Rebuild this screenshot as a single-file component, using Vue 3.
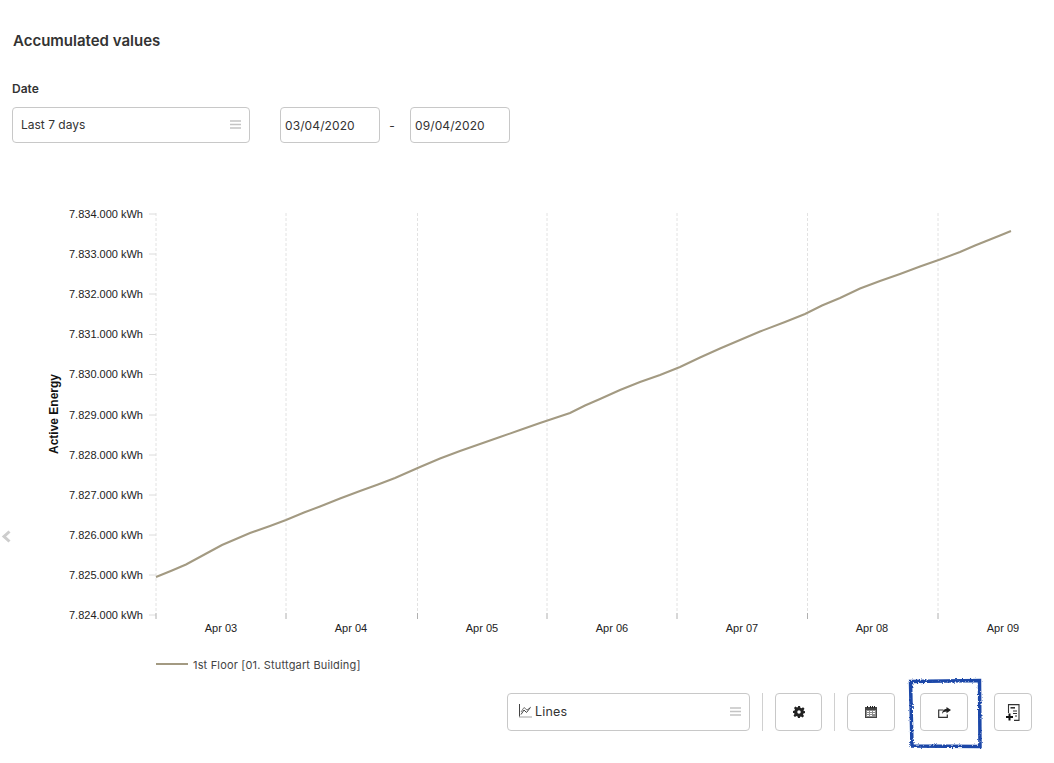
<script setup>
const yTicks = [
  { label: '7.834.000 kWh', y: 214 },
  { label: '7.833.000 kWh', y: 254 },
  { label: '7.832.000 kWh', y: 294 },
  { label: '7.831.000 kWh', y: 334.5 },
  { label: '7.830.000 kWh', y: 374.5 },
  { label: '7.829.000 kWh', y: 415 },
  { label: '7.828.000 kWh', y: 455 },
  { label: '7.827.000 kWh', y: 495 },
  { label: '7.826.000 kWh', y: 535 },
  { label: '7.825.000 kWh', y: 575 },
  { label: '7.824.000 kWh', y: 615 }
]
const xLines = [156, 286, 417.5, 547, 677, 807.5, 938]
const xLabels = [
  { label: 'Apr 03', x: 221 },
  { label: 'Apr 04', x: 351 },
  { label: 'Apr 05', x: 482 },
  { label: 'Apr 06', x: 612 },
  { label: 'Apr 07', x: 742 },
  { label: 'Apr 08', x: 872 },
  { label: 'Apr 09', x: 1003 }
]
const curve = '156,577 172,570.5 186,564.5 198,558 210,551.5 222,545 236,539 250,533 270,526 286,520 304,512.5 320,506.5 340,498.5 360,491 378,484.5 395,478 420,467 440,458.5 460,451 480,444 500,437 520,430 540,423 555,418 570,413 585,405.5 600,399 620,390 640,382 660,375 680,367 700,357.5 720,348.5 740,340 760,331.5 785,322 805,314 822,305.5 840,298 860,288.5 880,281 900,274 920,266.5 940,259.5 960,252 975,245.5 985,241.5 1000,235.5 1011,231'
</script>

<template>
  <div class="page">
    <h1 class="title">Accumulated values</h1>
    <div class="label">Date</div>
    <div class="filters">
      <div class="select select-range">
        <span>Last 7 days</span>
        <svg class="burger" width="11" height="9" viewBox="0 0 11 9"><path d="M0 1h11M0 4.500h11M0 8h11" stroke="#c4c4c4" stroke-width="1.500" /></svg>
      </div>
      <div class="dates">
        <div class="date">03/04/2020</div>
        <span class="dash">-</span>
        <div class="date">09/04/2020</div>
      </div>
    </div>

    <svg class="chart" width="1054" height="513" viewBox="0 180 1054 513">
      <g stroke="#e2e2e2" stroke-width="1" stroke-dasharray="3 2">
        <line v-for="x in xLines" :key="x" :x1="x" :x2="x" y1="213" y2="613" />
      </g>
      <g stroke="#dcdcdc" stroke-width="1">
        <line v-for="t in yTicks" :key="t.y" x1="149" x2="156" :y1="t.y" :y2="t.y" />
        <line v-for="x in xLines" :key="'t' + x" :x1="x" :x2="x" y1="613" y2="619" stroke="#b0b0b0" />
      </g>
      <g class="axis">
        <text v-for="t in yTicks" :key="t.label" x="143" :y="t.y + 3.500" text-anchor="end">{{ t.label }}</text>
        <text v-for="t in xLabels" :key="t.label" :x="t.x" y="632" text-anchor="middle">{{ t.label }}</text>
      </g>
      <text class="axis-title" transform="translate(58 414) rotate(-90)" text-anchor="middle">Active Energy</text>
      <polyline :points="curve" fill="none" stroke="#a39a82" stroke-width="2" />
      <line x1="156" x2="188" y1="664" y2="664" stroke="#a39a82" stroke-width="2" />
      <text class="legend" x="193" y="669">1st Floor [01. Stuttgart Building]</text>
      <path d="M9.500 531.500 4 536.500l5.500 5" fill="none" stroke="#cdcdcd" stroke-width="3" />
    </svg>

    <div class="toolbar">
      <div class="select select-type">
        <span class="type-label">
          <svg width="13" height="14" viewBox="0 0 13 14" fill="none" stroke="#444" stroke-width="1">
            <path d="M.5 0v12.500" />
            <path d="M.5 13h12.500" stroke-dasharray="1 1" />
            <path d="M2 10.500 5 6l2.500 2.500L11 4" />
            <path d="M2 8 5 3.500 8 6l4-3" stroke-width=".7" />
          </svg>
          <span class="lines-text">Lines</span>
        </span>
        <svg class="burger" width="11" height="9" viewBox="0 0 11 9"><path d="M0 1h11M0 4.500h11M0 8h11" stroke="#c4c4c4" stroke-width="1.500" /></svg>
      </div>
      <span class="sep"></span>
      <button class="btn btn-settings">
        <svg width="12" height="12" viewBox="0 0 24 24" fill="#222">
          <path fill-rule="evenodd" d="M10 0h4l.8 3.600 2.200.9 3.200-2 2.800 2.800-2 3.200.9 2.200L24 10v4l-3.100.8-.9 2.200 2 3.200-2.800 2.800-3.200-2-2.200.9L14 24h-4l-.8-3.100-2.200-.9-3.200 2-2.800-2.800 2-3.200-.9-2.200L0 14v-4l3.100-.8.9-2.200-2-3.200L4.800 1l3.200 2 2.200-.9zM12 8.500a3.500 3.500 0 1 0 0 7 3.500 3.500 0 0 0 0-7z" />
        </svg>
      </button>
      <span class="sep"></span>
      <button class="btn btn-calendar">
        <svg width="12" height="12" viewBox="0 0 12 12" shape-rendering="crispEdges">
          <path d="M0 1h12v11H0z" fill="#444" />
          <path d="M2.500 0v2M5 0v2M7 0v2M9.500 0v2" stroke="#222" stroke-width="1" />
          <path d="M1 4h10v7H1z" fill="#8c8c8c" />
          <path d="M2 5h2v1H2zM5 5h2v1H5zM8 5h2v1H8zM2 7h2v1H2zM5 7h2v1H5zM8 7h2v1H8zM5 9h2v1H5zM2 9h2v1H2z" fill="#fff" />
        </svg>
      </button>
      <div class="share-wrap">
        <button class="btn btn-share">
          <svg width="13" height="11" viewBox="0 0 13 11" fill="none">
            <path d="M5.500 3H.7v7.300h8.600V7.500" stroke="#333" stroke-width="1.200" />
            <path d="M8.500 0l4.500 3-4.500 3.200V4.400C6.500 4.400 5 5 4 7 4 4.200 6 2 8.500 1.800z" fill="#222" />
          </svg>
        </button>
        <svg class="mark" width="78" height="75" viewBox="0 0 78 75">
          <defs>
            <filter id="rough" x="-5%" y="-5%" width="110%" height="110%">
              <feTurbulence type="fractalNoise" baseFrequency="0.6" numOctaves="2" seed="4" />
              <feDisplacementMap in="SourceGraphic" scale="3" />
            </filter>
          </defs>
          <path d="M3.500 4.500 L72.500 3.500 L73 69.500 L5 69 Z" fill="none" stroke="#1a46a8" stroke-width="3.500" filter="url(#rough)" />
        </svg>
      </div>
      <button class="btn btn-report">
        <svg width="14" height="17" viewBox="0 0 14 17" fill="none">
          <path d="M2.500 9V.6h10.500v15.800H8" stroke="#333" stroke-width="1.100" />
          <path d="M4.500 3h4.500v1.600H4.500z" fill="#333" />
          <path d="M7 7h4M7 9.500h4M9 12h2" stroke="#333" stroke-width="1" />
          <path d="M0 13h7M3.500 9.500v7" stroke="#111" stroke-width="2" />
        </svg>
      </button>
    </div>
  </div>
</template>

<style>
html, body {
  margin: 0;
  background: #fff;
}
</style>

<style scoped>
.page {
  width: 1054px;
  height: 763px;
  box-sizing: border-box;
  padding-top: 32px;
  overflow: hidden;
  font-family: Inter, "Liberation Sans", sans-serif;
  color: #333;
}
.title {
  margin: 0 0 0 13px;
  font-size: 15px;
  line-height: 18px;
  font-weight: 600;
}
.label {
  margin: 30px 0 0 12px;
  font-size: 12px;
  line-height: 18px;
  font-weight: 600;
}
.filters {
  display: flex;
  gap: 30px;
  margin: 9px 0 0 12px;
}
.select {
  display: flex;
  align-items: center;
  justify-content: space-between;
  box-sizing: border-box;
  border: 1px solid #c8c8c8;
  border-radius: 4px;
  font-size: 12px;
  background: #fff;
}
.select-range {
  width: 238px;
  height: 36px;
  padding: 0 8px 2px 8px;
}
.dates {
  display: flex;
  align-items: center;
}
.date {
  box-sizing: border-box;
  width: 100px;
  height: 36px;
  padding-left: 4px;
  display: flex;
  align-items: center;
  border: 1px solid #c8c8c8;
  border-radius: 4px;
  font-size: 12px;
  letter-spacing: 0.1px;
}
.dash {
  width: 24px;
  margin-right: 6px;
  text-align: center;
  font-size: 12px;
}
.chart {
  display: block;
  margin-top: 37px;
}
.axis text {
  font-family: "Liberation Sans", Arial, sans-serif;
  font-size: 11px;
  fill: #222;
}
.axis-title {
  font-family: "Liberation Sans", Arial, sans-serif;
  font-size: 12px;
  font-weight: 700;
  fill: #111;
}
.legend {
  font-family: Inter, "Liberation Sans", sans-serif;
  font-size: 11px;
  letter-spacing: 0.17px;
  fill: #444;
}
.toolbar {
  display: flex;
  align-items: center;
  height: 38px;
  padding-left: 507px;
}
.select-type {
  width: 243px;
  height: 38px;
  padding: 0 8px 2px 11px;
}
.type-label {
  display: flex;
  align-items: center;
  gap: 3px;
}
.lines-text {
  font-size: 12.5px;
  letter-spacing: 0.2px;
}
.sep {
  width: 1px;
  height: 38px;
  background: #d0d0d0;
  margin: 0 12px;
}
.btn {
  display: flex;
  align-items: center;
  justify-content: center;
  box-sizing: border-box;
  height: 38px;
  padding: 0;
  background: #fff;
  border: 1px solid #c8c8c8;
  border-radius: 4px;
}
.btn-settings { width: 47px; }
.btn-calendar { width: 48px; }
.btn-share { width: 48px; }
.btn-report { width: 38px; margin-left: 26px; }
.share-wrap {
  position: relative;
  margin-left: 25px;
}
.mark {
  position: absolute;
  left: -13px;
  top: -16px;
  pointer-events: none;
}
</style>
